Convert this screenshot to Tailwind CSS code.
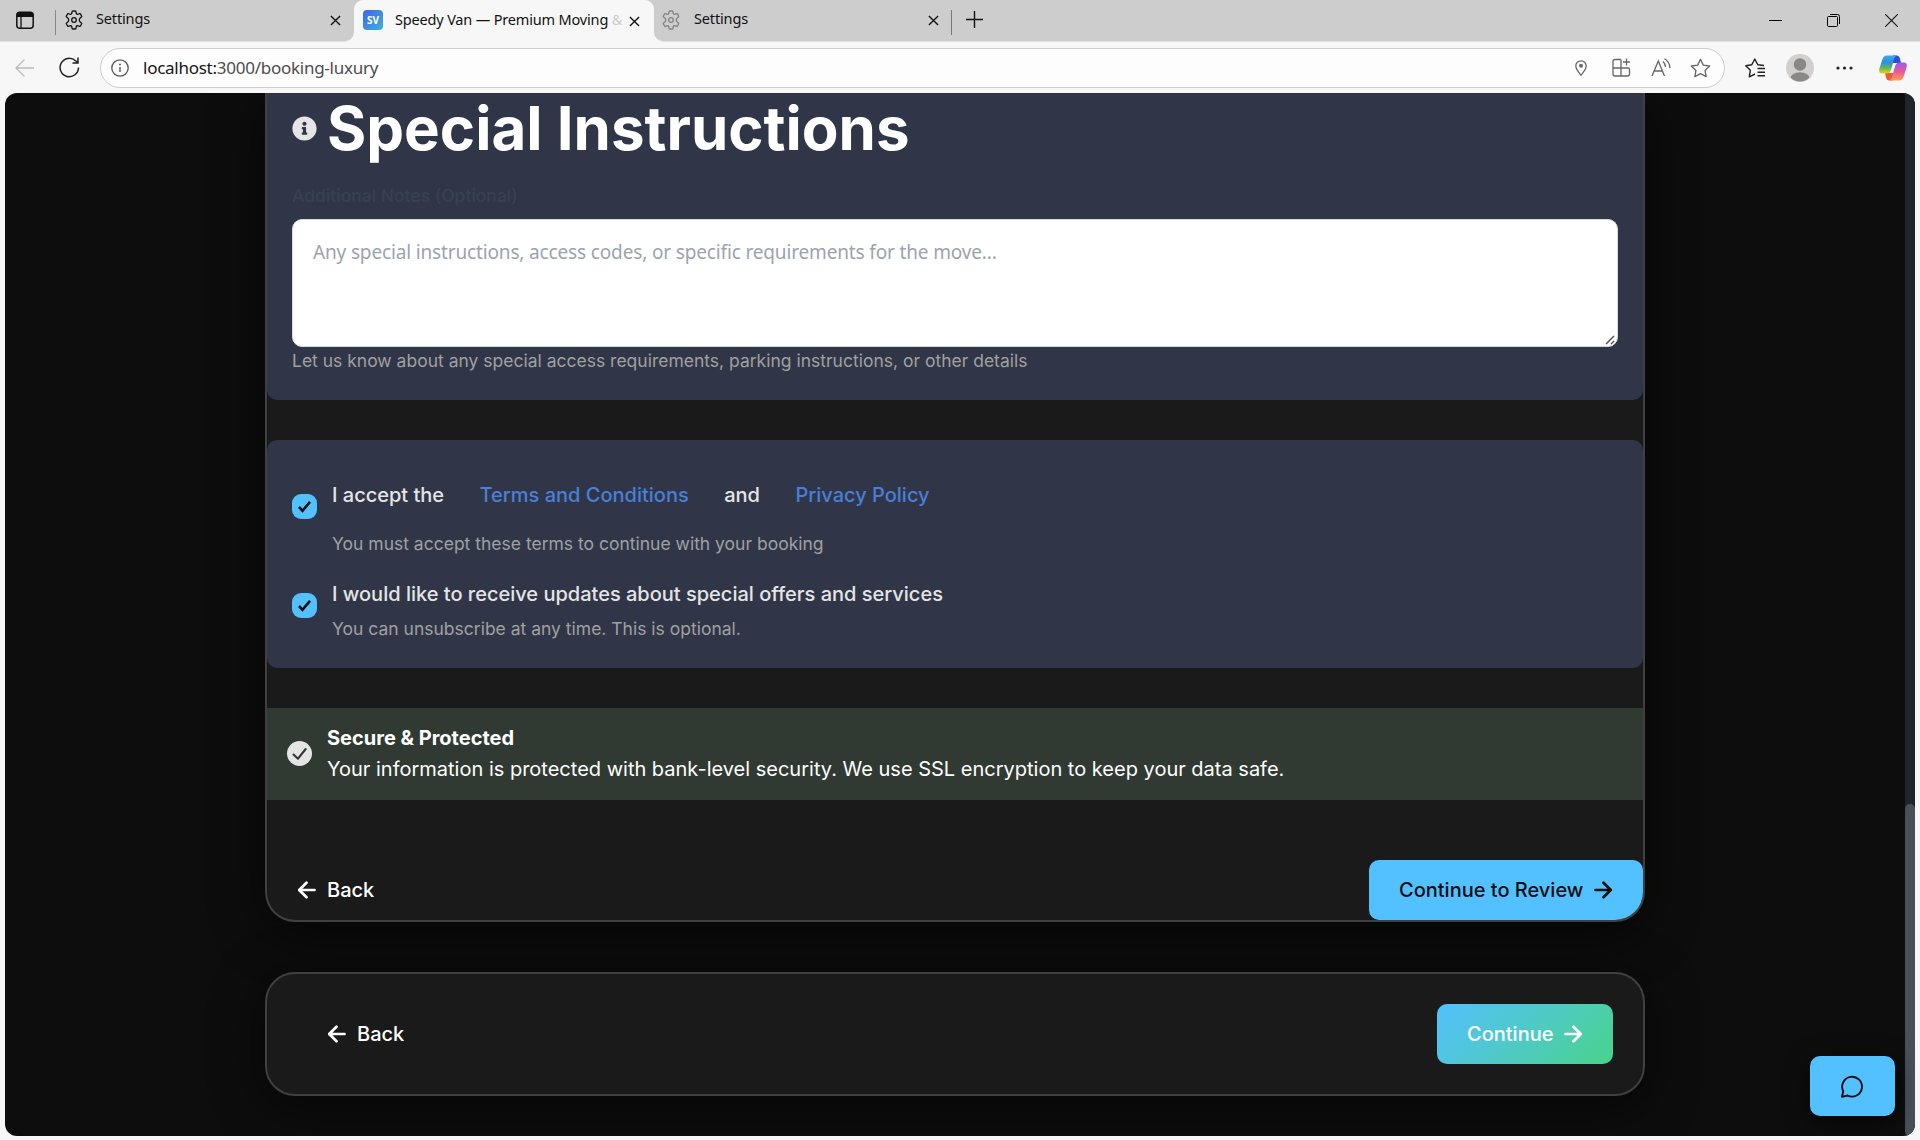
<!DOCTYPE html>
<html lang="en">
<head>
<meta charset="utf-8">
<title>Speedy Van — Premium Moving</title>
<script src="https://cdn.jsdelivr.net/npm/@tailwindcss/browser@4"></script>
</head>
<body class="w-[1920px] h-[1140px] overflow-hidden bg-[#f7f7f7] font-['Inter',sans-serif] flex flex-col">
<svg class="hidden">
  <symbol id="gear" viewBox="0 0 20 20"><g fill="none" stroke="currentColor" stroke-width="1.3" stroke-linejoin="round"><path d="M8.2 1.2Q10 .8 11.8 1.2L12.3 3.6Q12.6 4.4 13.6 4.3L15.9 3.5Q17.300 4.900 17.800 6.600L16 8.300Q15.300 9 15.300 10Q15.300 11 16 11.700L17.800 13.400Q17.300 15.100 15.900 16.500L13.600 15.700Q12.600 15.600 12.300 16.400L11.800 18.800Q10 19.200 8.200 18.800L7.700 16.400Q7.400 15.600 6.400 15.700L4.100 16.500Q2.700 15.100 2.200 13.400L4 11.700Q4.700 11 4.700 10Q4.700 9 4 8.300L2.200 6.600Q2.700 4.900 4.100 3.500L6.400 4.300Q7.400 4.400 7.700 3.600Z"/><circle cx="10" cy="10" r="2.300"/></g></symbol>
  <symbol id="x" viewBox="0 0 12 12"><path d="M1 1L11 11M11 1L1 11" fill="none" stroke="currentColor" stroke-width="1.500"/></symbol>
  <symbol id="arrow" viewBox="0 0 18 18"><path d="M1.500 9H16.500M9.500 1.700L16.800 9L9.500 16.300" fill="none" stroke="currentColor" stroke-width="2.700" stroke-linecap="round" stroke-linejoin="round"/></symbol>
</svg>

<!-- Tab strip -->
<header class="h-[42px] shrink-0 bg-[#cdcdcd] flex font-['Noto_Sans',sans-serif] text-[15px] text-[#111]">
  <div class="w-[354px] bg-[#f7f7f7]"><div class="h-[42px] bg-[#cdcdcd] rounded-br-[10px] border-b border-[#e2e2e2] flex items-center pl-4">
    <svg class="w-[18px] h-[18px] -mt-px" viewBox="0 0 18 18"><rect x=".8" y="1.300" width="16.400" height="15.900" rx="3" fill="none" stroke="#111" stroke-width="1.500"/><path d="M1 6V4Q1 1.300 4 1.300H14Q17 1.300 17 4V6Z" fill="#111"/><path d="M5 6V17" stroke="#111" stroke-width="1.300"/></svg>
    <div class="w-px h-[25px] bg-[#888] ml-[21px] mt-1"></div>
    <svg class="w-5 h-5 ml-2 -mt-0.5"><use href="#gear"/></svg>
    <span class="ml-3 text-[14.500px] -mt-[3px] tracking-[-0.150px]">Settings</span>
    <svg class="w-[11px] h-[11px] ml-auto mr-[13px]"><use href="#x"/></svg>
  </div></div>
  <div class="w-[300px] bg-[#cdcdcd]"><div class="h-[42px] bg-[#f7f7f7] rounded-t-[9px] flex items-center pl-[9px]">
    <span class="w-5 h-5 -mt-0.5 rounded-[4px] bg-gradient-to-br from-[#4062e8] to-[#42afd5] text-white text-[10px] font-bold flex items-center justify-center">SV</span>
    <span class="ml-3 -mt-[3px] w-[228px] whitespace-nowrap text-[14.500px] tracking-[-0.170px]">Speedy Van — Premium Moving <span class="text-[#ccc]">&amp;</span></span>
    <svg class="w-[11px] h-[11px] ml-[6px]"><use href="#x"/></svg>
  </div></div>
  <div class="flex-1 bg-[#f7f7f7]"><div class="h-[42px] bg-[#cdcdcd] rounded-bl-[10px] border-b border-[#e2e2e2] flex items-center pl-[7px]">
    <svg class="w-5 h-5 -mt-0.5 text-[#828282]"><use href="#gear"/></svg>
    <span class="ml-[13px] text-[14.500px] -mt-[3px] tracking-[-0.150px] w-[220px]">Settings</span>
    <svg class="w-[11px] h-[11px] ml-[14px]"><use href="#x"/></svg>
    <div class="w-px h-[25px] bg-[#777] ml-[12px] mt-1"></div>
    <svg class="w-[17px] h-[17px] ml-[14px] -mt-[3px]" viewBox="0 0 17 17"><path d="M8.500 0V17M0 8.500H17" stroke="#111" stroke-width="1.400"/></svg>
    <div class="ml-auto flex items-center pr-[22px]">
      <div class="w-[13px] h-px bg-black"></div>
      <svg class="w-[13px] h-[13px] ml-[45px]" viewBox="0 0 13 13"><g fill="none" stroke="#000"><rect x=".5" y="2.500" width="10" height="10" rx="1"/><path d="M3 .5H10.500Q12.500 .5 12.500 2.500V10"/></g></svg>
      <svg class="w-[13px] h-[13px] ml-[45px]" viewBox="0 0 13 13"><path d="M0 0L13 13M13 0L0 13" stroke="#111" stroke-width="1.100"/></svg>
    </div>
  </div></div>
</header>

<!-- Toolbar -->
<div class="h-[51px] shrink-0 flex items-center pl-[15px] pr-[13px]">
  <svg class="w-5 h-5" viewBox="0 0 20 20"><path d="M19 10H1M9.500 1.500L1 10L9.500 18.500" fill="none" stroke="#bcbcbc" stroke-width="1.300"/></svg>
  <svg class="w-[21px] h-[21px] ml-[24px]" viewBox="0 0 21 21"><path d="M19.500 10.500A9.200 9.200 0 1 1 16.500 3.700L18.500 5.500M19 .5V6H13.500" fill="none" stroke="#222" stroke-width="1.500"/></svg>
  <div class="ml-5 w-[1625px] h-10 bg-[#fdfdfd] border border-[#cfcfcf] rounded-full flex items-center pl-[10px] pr-[13px]">
    <svg class="w-[18px] h-[18px]" viewBox="0 0 18 18"><circle cx="9" cy="9" r="8.200" fill="none" stroke="#555" stroke-width="1.300"/><path d="M9 8V13" stroke="#555" stroke-width="1.400"/><circle cx="9" cy="5.500" r=".9" fill="#555"/></svg>
    <span class="ml-[14px] font-['Noto_Sans',sans-serif] text-[17px] tracking-[-0.260px] text-[#4d4d4d]"><span class="text-[#151515]">localhost:</span>3000/booking-luxury</span>
    <div class="ml-auto flex items-center text-[#666]">
      <svg class="w-3 h-4" viewBox="0 0 12 16"><path d="M6 15.300C4 12.500 .8 9.500 .8 6A5.200 5.200 0 0 1 11.200 6C11.200 9.500 8 12.500 6 15.300Z" fill="none" stroke="currentColor" stroke-width="1.300"/><circle cx="6" cy="5.800" r="2" fill="currentColor"/></svg>
      <svg class="w-[19px] h-[19px] ml-[25px]" viewBox="0 0 19 19"><g fill="none" stroke="currentColor" stroke-width="1.300"><path d="M9 1.500H3Q1 1.500 1 3.500V16Q1 18 3 18H15.500Q17.500 18 17.500 16V11.500Q17.500 10 16 10H1M9 1.500V18M14.500 .5V7.500M11 4H18"/></g></svg>
      <svg class="w-[20px] h-[19px] ml-[20px]" viewBox="0 0 20 19"><g fill="none" stroke="currentColor" stroke-width="1.300"><path d="M1 18L7.300 3L13.500 18M3.200 13H11.400M12 3.500Q14.200 5.500 14.500 9M13.500 .7Q18.500 3.500 19 10"/></g></svg>
      <svg class="w-[21px] h-[20px] ml-[19px]" viewBox="0 0 24 23"><path d="M12 1.500L15.200 8.200L22.500 9.200L17.200 14.300L18.500 21.500L12 18L5.500 21.500L6.800 14.300L1.500 9.200L8.800 8.200Z" fill="none" stroke="currentColor" stroke-width="1.500" stroke-linejoin="round"/></svg>
    </div>
  </div>
  <svg class="w-[21px] h-5 ml-[20px]" viewBox="0 0 21 20"><path d="M19 7.500L12.800 6.800L9.800 1L6.800 6.800L.8 7.800L5.300 12.300L4.300 18.800L10 16M12.500 10.500H20M12.500 14.200H20M12.500 17.700H20" fill="none" stroke="#222" stroke-width="1.400" stroke-linejoin="round"/></svg>
  <svg class="w-7 h-7 ml-[20px]" viewBox="0 0 28 28"><clipPath id="av"><circle cx="14" cy="14" r="13.500"/></clipPath><circle cx="14" cy="14" r="14" fill="#d2d0ce"/><g fill="#8a8886" clip-path="url(#av)"><circle cx="14" cy="10.500" r="6.200"/><ellipse cx="14" cy="25" rx="10" ry="6.800"/></g></svg>
  <svg class="w-[17px] h-1 ml-[22px]" viewBox="0 0 17 4" fill="#222"><circle cx="2" cy="2" r="1.600"/><circle cx="8.500" cy="2" r="1.600"/><circle cx="15" cy="2" r="1.600"/></svg>
  <svg class="w-7 h-[26px] ml-auto" viewBox="0 0 28 26"><defs>
    <linearGradient id="c1" x1="0" y1="0" x2="0" y2="1"><stop offset="0" stop-color="#3da5f0"/><stop offset=".4" stop-color="#2e8fe0"/><stop offset=".7" stop-color="#65b94c"/><stop offset="1" stop-color="#f5cf10"/></linearGradient>
    <linearGradient id="c2" x1="0" y1="0" x2="0" y2="1"><stop offset="0" stop-color="#9a5bf0"/><stop offset=".5" stop-color="#e8589a"/><stop offset="1" stop-color="#ffa04e"/></linearGradient></defs>
    <path d="M14 .5H18Q20 .5 20.800 3L22 8H14Z" fill="#2a4fd0"/><path d="M14 25.500H10Q8 25.500 7.200 23L6 18H14Z" fill="#ee5a35"/>
    <path d="M8 .5H18Q16 1 15 4L12 15Q11 18.500 7.500 18.500H3Q-.5 18.500 .3 14L3.300 4.500Q4.500 .5 8 .5Z" fill="url(#c1)"/>
    <path d="M20 25.500H10Q12 25 13 22L16 11Q17 7.500 20.500 7.500H25Q28.500 7.500 27.700 12L24.700 21.500Q23.500 25.500 20 25.500Z" fill="url(#c2)"/>
    <path d="M15.300 8H17.500Q16.500 9 16 11L13.500 18H10.800Q11.700 17 12.200 15.500Z" fill="#fff"/></svg>
</div>

<!-- Page viewport -->
<div class="relative mx-[5px] h-[1043px] shrink-0 rounded-[12px] overflow-hidden bg-[#0d0d0d] flex">
  <main class="w-[1900px] pl-[260px]">
    <section class="w-[1380px] h-[829px] border-2 border-t-0 border-[#404040] bg-[#1a1a1a] rounded-b-[30px] overflow-hidden flex flex-col shadow-[0_10px_50px_rgba(0,0,0,0.600)]">
      <div class="h-[307px] shrink-0 bg-[#303648] rounded-b-[10px] px-[25px] flex flex-col">
        <div class="h-[71px] flex items-center gap-[10px]">
          <svg class="w-[25px] h-[25px]" viewBox="0 0 512 512"><path fill="#e5e5e5" d="M256 8C119 8 8 119 8 256s111 248 248 248 248-111 248-248S393 8 256 8zm0 110c23 0 42 19 42 42s-19 42-42 42-42-19-42-42 19-42 42-42zm56 254c0 7-5 12-12 12h-88c-7 0-12-5-12-12v-24c0-7 5-12 12-12h12v-64h-12c-7 0-12-5-12-12v-24c0-7 5-12 12-12h64c7 0 12 5 12 12v100h12c7 0 12 5 12 12v24z"/></svg>
          <h1 class="-mt-px text-[60px] leading-[72px] font-bold text-white whitespace-nowrap"><span>Special Instructions</span></h1>
        </div>
        <label class="mt-[19px] h-[26px] leading-[26px] text-[17.500px] font-medium text-[#374151]"><span>Additional Notes (Optional)</span></label>
        <div class="relative mt-[10px] h-[128px] bg-white border border-[#d5d9e0] rounded-[10px] px-5 pt-[17px] font-['Noto_Sans',sans-serif] text-[19px] tracking-[-0.150px] leading-[30px] text-[#9ca3af]"><span>Any special instructions, access codes, or specific requirements for the move...</span>
          <svg class="absolute right-[2px] bottom-[1px] w-[10px] h-[10px]" viewBox="0 0 10 10"><path d="M1 9L9 1M6 9L9 6" stroke="#555" stroke-width="1.500"/></svg>
        </div>
        <p class="text-[17.500px] leading-[28px] text-[#a0a0a0]"><span>Let us know about any special access requirements, parking instructions, or other details</span></p>
      </div>
      <div class="mt-10 h-[228px] shrink-0 bg-[#303648] rounded-[10px] px-[25px] pt-10 flex flex-col gap-[20px]">
        <div class="flex gap-[15px] h-[79px]">
          <div class="mt-[14px] w-[25px] h-[25px] rounded-[9px] bg-[#53c0ff] flex items-center justify-center"><svg class="w-[15px] h-[13px]" viewBox="0 0 15 13"><path d="M2 7L5.500 10.800L13 1.800" fill="none" stroke="#0d0d0d" stroke-width="2.600"/></svg></div>
          <div>
            <div class="flex gap-[35.500px] h-[30px] leading-[30px] text-[20px] font-medium text-[#e5e5e5]"><span>I accept the</span><a class="text-[#4a7fd6]">Terms and Conditions</a><span>and</span><a class="text-[#4a7fd6]">Privacy Policy</a></div>
            <p class="mt-[21px] text-[17.500px] leading-[26px] text-[#a0a0a0]"><span>You must accept these terms to continue with your booking</span></p>
          </div>
        </div>
        <div class="flex gap-[15px]">
          <div class="mt-[14px] w-[25px] h-[25px] rounded-[9px] bg-[#53c0ff] flex items-center justify-center"><svg class="w-[15px] h-[13px]" viewBox="0 0 15 13"><path d="M2 7L5.500 10.800L13 1.800" fill="none" stroke="#0d0d0d" stroke-width="2.600"/></svg></div>
          <div>
            <p class="leading-[30px] text-[20px] font-medium text-[#e5e5e5]"><span>I would like to receive updates about special offers and services</span></p>
            <p class="mt-[7px] text-[17.500px] leading-[26px] text-[#a0a0a0]"><span>You can unsubscribe at any time. This is optional.</span></p>
          </div>
        </div>
      </div>
      <div class="mt-10 h-[92px] shrink-0 bg-[#303a33] px-5 flex items-center gap-[15px] text-white text-[20px]">
        <svg class="w-[25px] h-[25px] -mt-px" viewBox="0 0 25 25"><circle cx="12.500" cy="12.500" r="12.500" fill="#e5e5e5"/><path d="M6.500 13.500L11 17.700L18.700 8" fill="none" stroke="#303a33" stroke-width="2.100" stroke-linecap="round" stroke-linejoin="round"/></svg>
        <div><p class="leading-[30px] font-bold"><span>Secure &amp; Protected</span></p><p class="leading-[32px]"><span>Your information is protected with bank-level security. We use SSL encryption to keep your data safe.</span></p></div>
      </div>
      <div class="mt-[60px] h-[60px] shrink-0 flex items-center justify-between text-[20px] font-medium">
        <button class="flex items-center gap-[11px] pl-[31px] text-white"><svg class="w-[18px] h-[18px] rotate-180"><use href="#arrow"/></svg><span>Back</span></button>
        <button class="w-[274px] h-[60px] flex items-center gap-[11px] pl-[30px] rounded-[10px] bg-[#53c0ff] text-[#0d0d0d]"><span>Continue to Review</span><svg class="w-[18px] h-[18px]"><use href="#arrow"/></svg></button>
      </div>
    </section>
    <section class="mt-[50px] w-[1380px] h-[124px] border-2 border-[#404040] bg-[#1a1a1a] rounded-[30px] px-[30px] flex items-center justify-between text-[20px] font-medium text-white shadow-[0_10px_50px_rgba(0,0,0,0.600)]">
      <button class="flex items-center gap-[11px] pl-[31px]"><svg class="w-[18px] h-[18px] rotate-180"><use href="#arrow"/></svg><span>Back</span></button>
      <button class="w-[176px] h-[60px] flex items-center gap-[11px] pl-[30px] rounded-[10px] bg-[linear-gradient(135deg,#53c0ff,#4ad38b)]"><span>Continue</span><svg class="w-[18px] h-[18px]"><use href="#arrow"/></svg></button>
    </section>
  </main>
  <div class="w-[10px] bg-[#212529] flex flex-col justify-end"><div class="h-[332px] bg-[#495057] rounded-[5px]"></div></div>
  <button class="absolute left-[1805px] top-[963px] w-[85px] h-[60px] rounded-[10px] bg-[#53c0ff] flex items-center justify-center shadow-[0_5px_25px_rgba(0,0,0,0.600)]">
    <svg class="w-[30px] h-[30px] -ml-px mt-px" viewBox="0 0 24 24"><path d="M7.900 20A9 9 0 1 0 4 16.100L2.800 21.200Z" fill="none" stroke="#0d0d0d" stroke-width="1.700" stroke-linejoin="round" transform="translate(1.500 1.200) scale(.88)"/></svg>
  </button>
</div>
</body>
</html>
